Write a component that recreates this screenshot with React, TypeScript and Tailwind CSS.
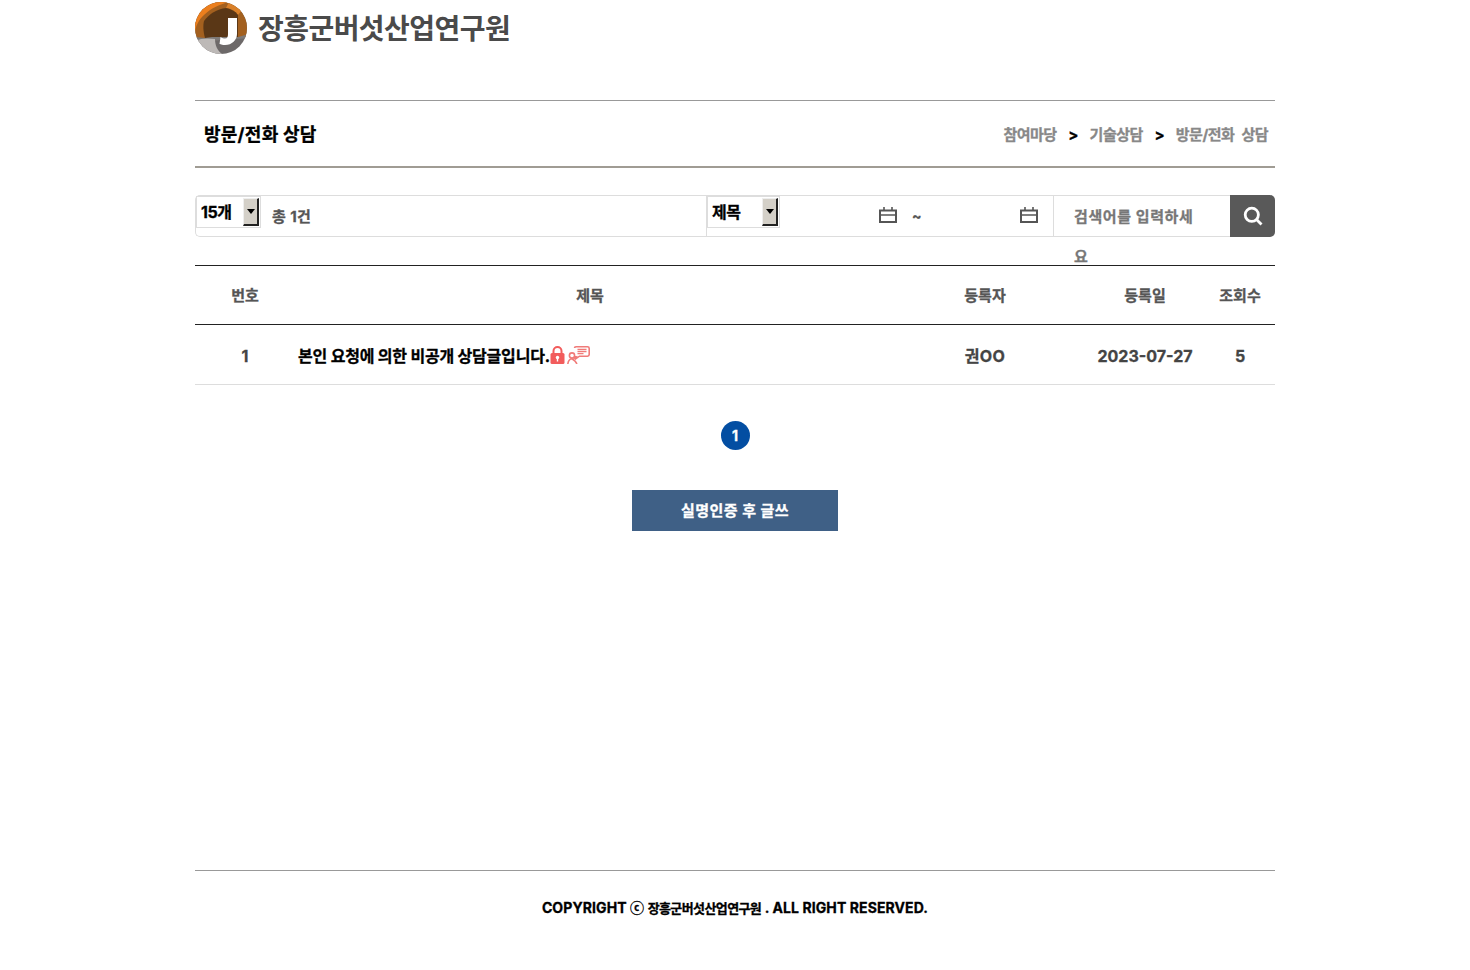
import React from "react";

function Logo() {
  return (
    <svg width="54" height="54" viewBox="0 0 54 54" className="block">
      <defs>
        <clipPath id="c"><circle cx="26" cy="27" r="26" /></clipPath>
      </defs>
      <g clipPath="url(#c)">
        <rect width="54" height="54" fill="#6d6969" />
        <path d="M0 0H54V36L36 37H0Z" fill="#a3601f" />
        <path d="M0 32C1 18 14 6 34 1H0Z" fill="#ec7f1e" />
        <path d="M34 1C38 2 43 5 47 9L43 14C39 9 35 7 31 7Z" fill="#d98029" />
        <path d="M10 37C8 30 8 24 9 20C14 13 22 8 31 7C36 8 40 10 43 14V36Z" fill="#5a3716" />
        <path d="M0 36L10 37L17 36L43 36L54 33V37L0 41Z" fill="#7e7a78" />
        <path d="M0 40C6 37 13 37 20 38C20 45 23 51 29 54H0Z" fill="#bdb9b7" />
        <path d="M33 17H42V33C42 39 37 44 30 44C28 44 26 43.500 24.500 43L25.500 36C27 37 29 37.500 30 37.500C32.500 37.500 33 35.500 33 33Z" fill="#fff" />
      </g>
    </svg>
  );
}

function FakeSelect({ label, width }: { label: string; width: string }) {
  return (
    <div className={`${width} h-[32px] border border-[#ddd] bg-white flex items-start justify-between pl-[4px] pr-[1px] pt-[1px] shrink-0`}>
      <span className="text-[16px] leading-[28px] text-black tracking-[-0.5px]">{label}</span>
      <span className="w-[16px] h-[28px] bg-[#d4d0c8] border-t border-l border-t-[#eee] border-l-[#eee] border-r-2 border-b-2 border-r-[#222] border-b-[#222] flex items-center justify-center">
        <svg width="8" height="5" viewBox="0 0 8 5"><path d="M0 0H8L4 5Z" fill="#000" /></svg>
      </span>
    </div>
  );
}

function Calendar() {
  return (
    <svg width="18" height="16" viewBox="0 0 18 16" fill="none" stroke="#555" strokeWidth="2" className="block shrink-0">
      <rect x="1" y="3.500" width="16" height="11.500" />
      <path d="M1 8H17M5 0V3.500M13 0V3.500" strokeWidth="1.600" />
    </svg>
  );
}

function Lock() {
  return (
    <svg width="15" height="18" viewBox="0 0 15 18" className="block shrink-0">
      <path d="M3.500 8V5a4 4 0 0 1 8 0v3" fill="none" stroke="#f25c5c" strokeWidth="2" />
      <rect x="0.500" y="7" width="14" height="11" rx="1.500" fill="#f25c5c" />
      <circle cx="7.500" cy="11.500" r="1.700" fill="#fff" />
      <rect x="6.800" y="12" width="1.400" height="3.500" fill="#fff" />
    </svg>
  );
}

function Chat() {
  return (
    <svg width="23" height="18" viewBox="0 0 23 18" fill="none" stroke="#f07b79" strokeWidth="1.600" className="block shrink-0">
      <path d="M7.500 2C7.500 1.200 8.200.8 9 .8H20.500C21.500.8 22.200 1.400 22.200 2.400V8.600C22.200 9.600 21.500 10.200 20.500 10.200H12.500L8.500 13V10" />
      <path d="M10.500 3.500H19.500M10.500 5.600H19.500M10.500 7.700H16.500" strokeWidth="1.300" />
      <circle cx="5" cy="9.500" r="2.600" />
      <path d="M.8 18C1.200 15 2.800 13 5 12.800L8 15M8 15L10 18M6.500 12.500L10.500 10.500" />
    </svg>
  );
}

const cols = "grid grid-cols-[100px_590px_200px_120px_70px]";

export default function App() {
  return (
    <div className="w-[1080px] mx-auto h-[970px] flex flex-col font-['Inter','Noto_Sans_CJK_KR',sans-serif] font-bold [-webkit-text-stroke-width:0.3px] text-[#444]">
      <header className="h-[100px] shrink-0 flex items-start pt-[1px] gap-[9px]">
        <Logo />
        <span className="text-[28px] leading-[56px] tracking-[-0.55px] text-[#4a4a4a] [-webkit-text-stroke-width:0px]">장흥군버섯산업연구원</span>
      </header>

      <div className="h-[68px] shrink-0 border-t border-t-[#999] border-b-2 border-b-[#a09c94] flex items-center justify-between pl-[9px] pr-[7px]">
        <h1 className="text-[18px] tracking-[0.25px] text-black pt-[1px]">방문/전화 상담</h1>
        <div className="flex items-center text-[15px] tracking-[-0.5px] [word-spacing:4px] text-[#888] pt-[3px]">
          <span>참여마당</span>
          <span className="w-[33px] text-center text-black">&gt;</span>
          <span>기술상담</span>
          <span className="w-[33px] text-center text-black">&gt;</span>
          <span>방문/전화 상담</span>
        </div>
      </div>

      <div className="mt-[27px] h-[42px] shrink-0 flex">
        <div className="w-[511px] border border-[#ddd] border-r-0 rounded-l-[5px] flex items-start">
          <FakeSelect label="15개" width="w-[65px]" />
          <span className="ml-[11px] mt-[11px] text-[15px] leading-[20px] tracking-[0.4px] text-[#555]">총 1건</span>
        </div>
        <div className="w-[348px] border border-[#ddd] flex items-start">
          <FakeSelect label="제목" width="w-[73px]" />
          <div className="ml-[99px] mt-[11px]"><Calendar /></div>
          <span className="ml-[15px] mt-[10px] text-[14px] leading-[20px] text-[#555]">~</span>
          <div className="ml-[98px] mt-[11px]"><Calendar /></div>
        </div>
        <div className="w-[176px] border-y border-[#ddd] pl-[20px] pr-[30px]">
          <p className="text-[15px] leading-[40px] tracking-[0.6px] pt-[1px] text-[#777]">검색어를 입력하세요</p>
        </div>
        <div className="w-[45px] bg-[#595959] rounded-r-[5px] flex items-center justify-center pb-[1px]">
          <svg width="20" height="20" viewBox="0 0 20 20" fill="none" stroke="#fff" strokeWidth="2.800">
            <circle cx="8.800" cy="8.800" r="6.600" />
            <path d="M13.800 13.800L18.500 18.500" />
          </svg>
        </div>
      </div>

      <div className="mt-[28px] shrink-0 border-t border-t-[#222]">
        <div className={`${cols} h-[59px] border-b border-b-[#222] items-center text-center text-[15px] text-[#555] pt-[2px]`}>
          <span>번호</span>
          <span>제목</span>
          <span>등록자</span>
          <span>등록일</span>
          <span>조회수</span>
        </div>
        <div className={`${cols} h-[60px] border-b border-b-[#ddd] items-center text-center text-[16px] text-[#444] pt-[3px]`}>
          <span>1</span>
          <div className="flex items-center pl-[3px] text-[16px] text-black tracking-[-0.2px]">
            <span>본인 요청에 의한 비공개 상담글입니다.</span>
            <span className="-mt-[3px]"><Lock /></span>
            <span className="ml-[2px] -mt-[3px]"><Chat /></span>
          </div>
          <span className="tracking-[0.4px]">권OO</span>
          <span>2023-07-27</span>
          <span>5</span>
        </div>
      </div>

      <div className="mt-[36px] flex justify-center shrink-0">
        <span className="w-[29px] h-[29px] rounded-full bg-[#034ea2] text-white text-[14px] flex items-center justify-center">1</span>
      </div>

      <div className="mt-[40px] flex justify-center shrink-0">
        <button className="w-[206px] h-[41px] bg-[#3f6086] text-white text-[15px] tracking-[0.5px] pt-[2px]">실명인증 후 글쓰</button>
      </div>

      <footer className="mt-[339px] border-t border-t-[#999] pt-[27px] text-center text-[14px] leading-[20px] text-black tracking-[0.1px]">
        COPYRIGHT ⓒ <span className="text-[13px] tracking-[-0.6px]">장흥군버섯산업연구원</span> . ALL RIGHT RESERVED.
      </footer>
    </div>
  );
}
